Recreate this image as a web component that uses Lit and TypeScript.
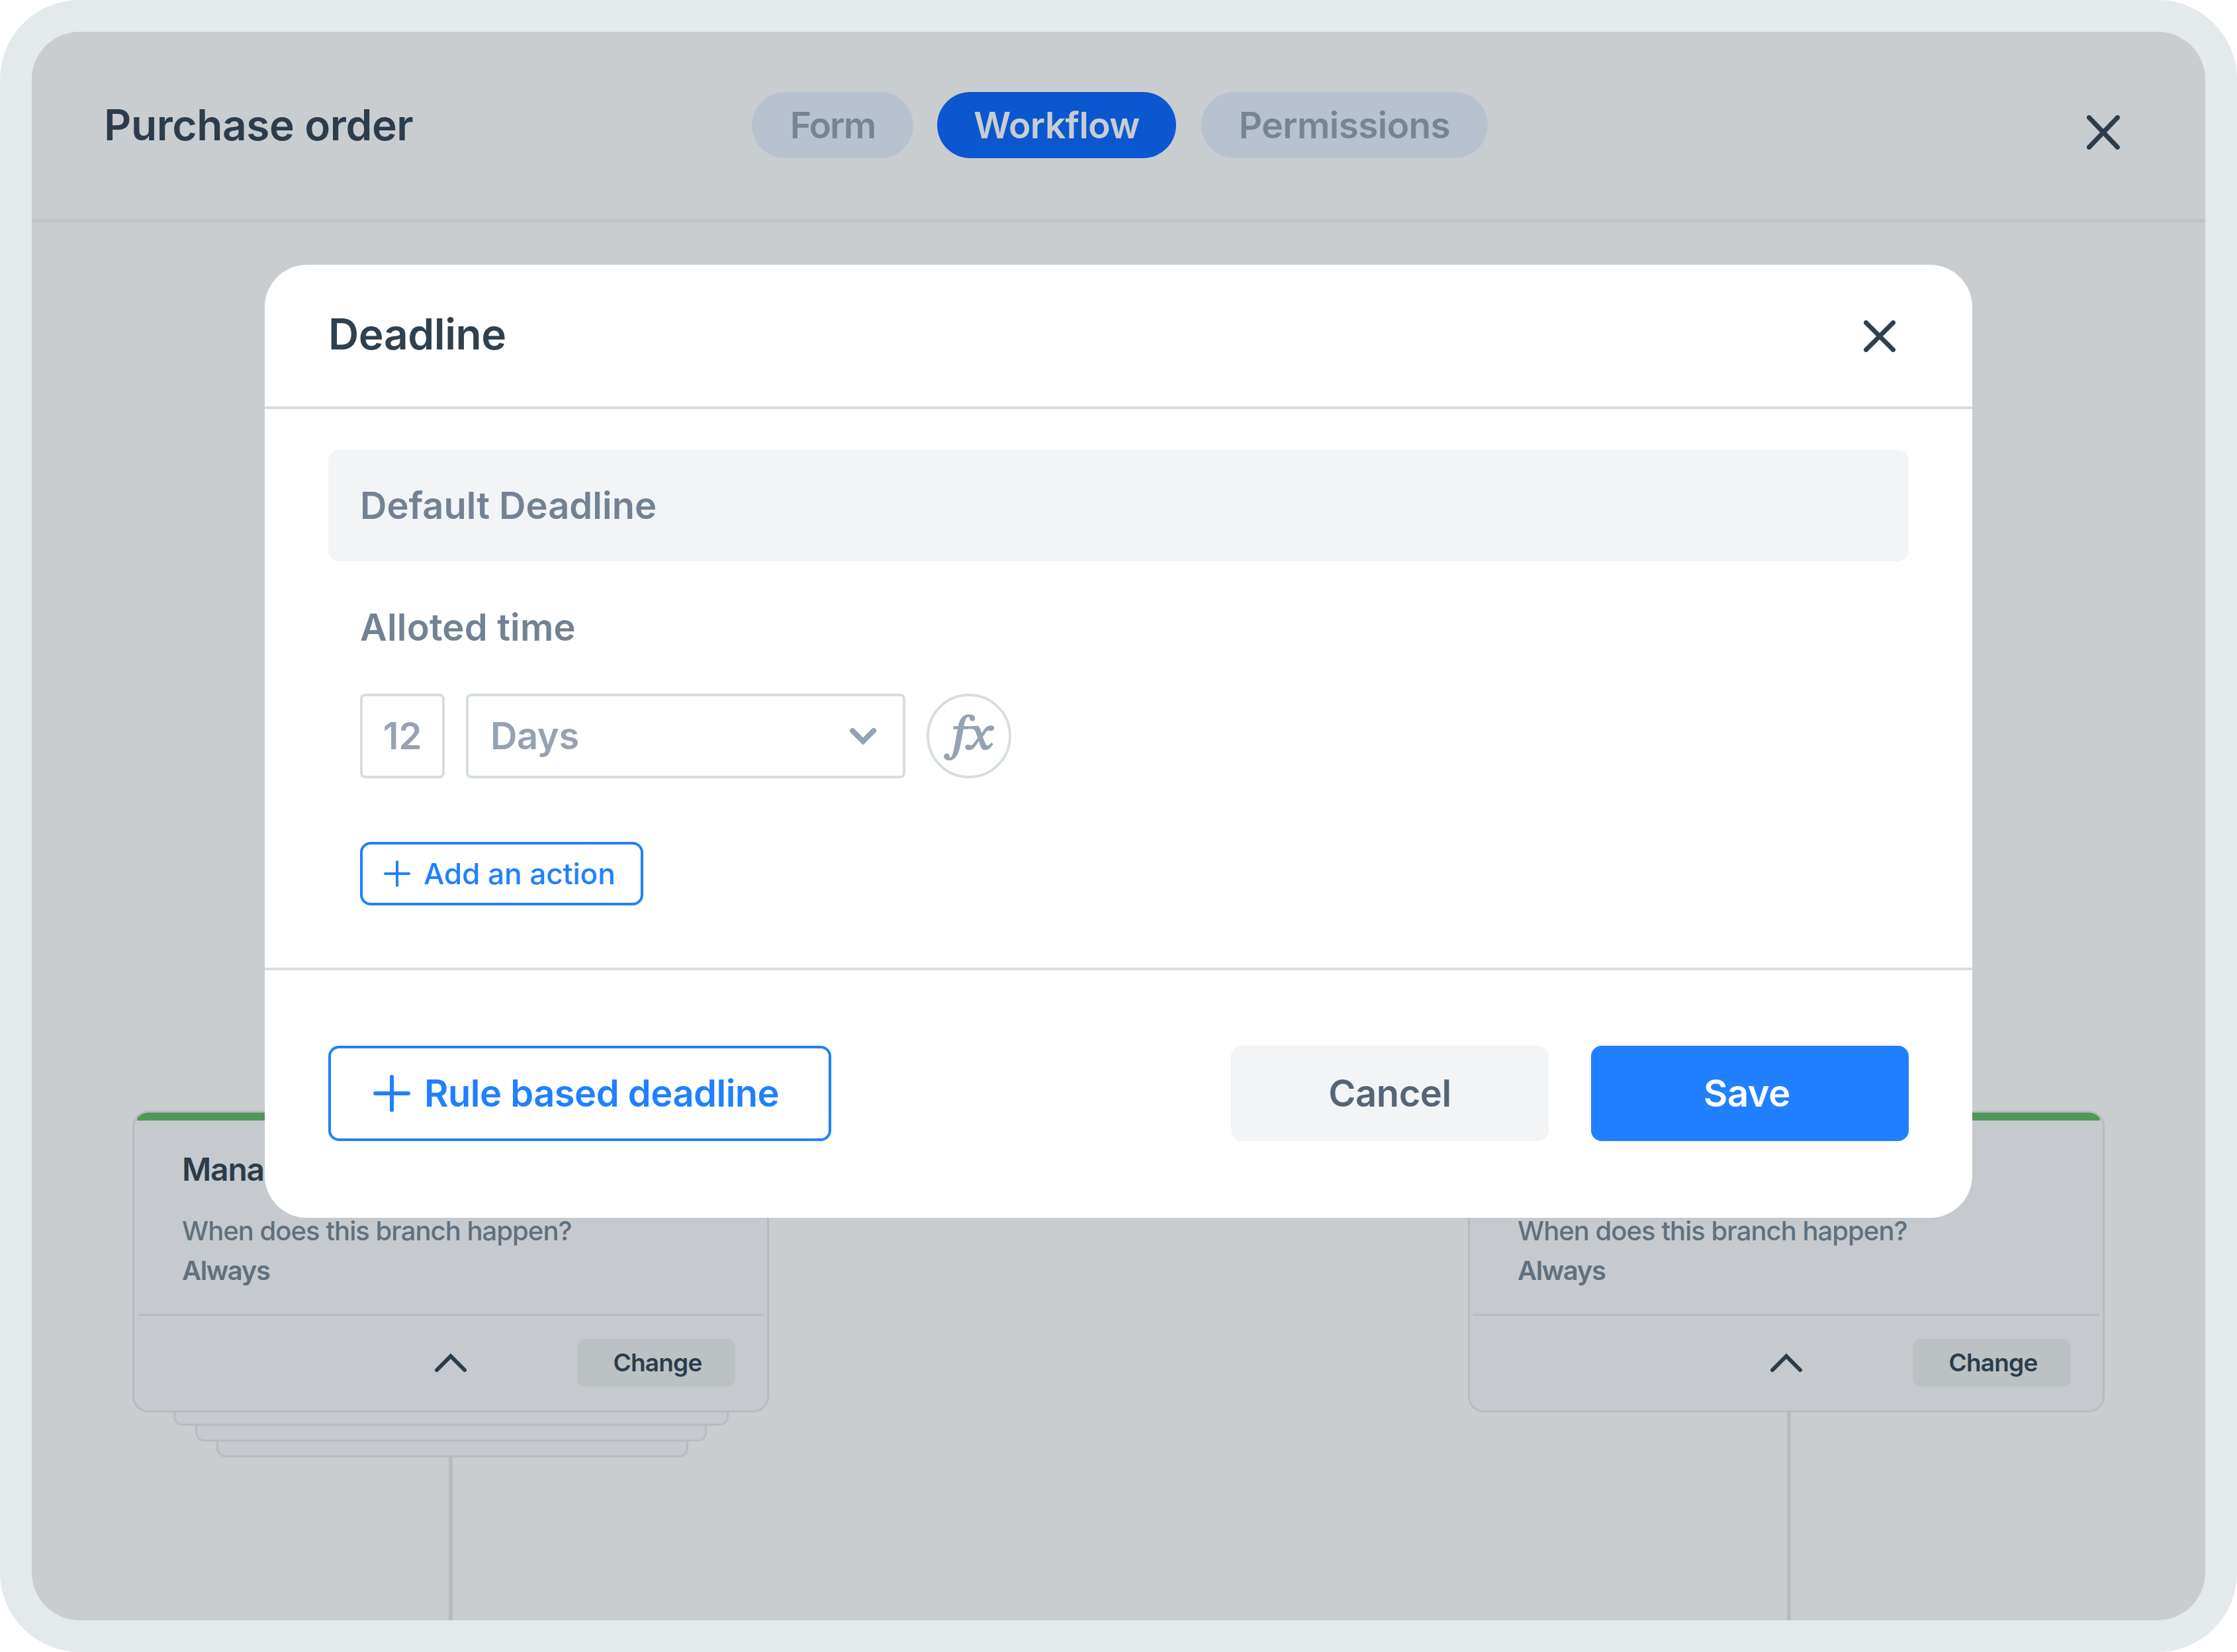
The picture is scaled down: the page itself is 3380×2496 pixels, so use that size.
import { LitElement, html, svg, css } from "lit";
import { customElement, property } from "lit/decorators.js";

const TABS = [
  { label: "Form", cls: "form" },
  { label: "Workflow", cls: "workflow active" },
  { label: "Permissions", cls: "permissions" },
];

const plus = (size: number, weight: number) => {
  const h = size / 2;
  const p = weight / 2;
  return html`<svg width=${size} height=${size} viewBox="0 0 ${size} ${size}">
    ${svg`<path d="M${h} ${p}V${size - p}M${p} ${h}H${size - p}" fill="none" stroke="currentColor" stroke-width=${weight} stroke-linecap="round" />`}
  </svg>`;
};

@customElement("branch-card")
class BranchCard extends LitElement {
  @property() heading = "";
  @property({ type: Boolean }) stacked = false;

  static styles = css`
    :host {
      display: flex;
      flex-direction: column;
      align-items: center;
      width: 962px;
      height: 770px;
      font-family: Inter, sans-serif;
    }
    .card {
      box-sizing: border-box;
      width: 962px;
      height: 456px;
      flex: none;
      border: 3px solid #b8bcc0;
      border-radius: 24px;
      background: #c6cace;
      overflow: hidden;
      display: flex;
      flex-direction: column;
    }
    .accent {
      height: 12px;
      margin: 0 4px;
      background: #4f9857;
      border-radius: 18px 18px 0 0;
      flex: none;
    }
    .info {
      height: 292px;
      box-sizing: border-box;
      padding: 45px 0 0 72px;
      flex: none;
      white-space: nowrap;
    }
    .heading {
      height: 58px;
      font-size: 48px;
      line-height: 58px;
      font-weight: 600;
      letter-spacing: -1.2px;
      color: #2c3c4a;
    }
    .question,
    .answer {
      font-size: 40px;
      line-height: 60px;
      color: #61707d;
    }
    .question {
      margin-top: 34px;
      font-weight: 500;
      letter-spacing: -0.96px;
    }
    .answer {
      font-weight: 600;
      letter-spacing: -1.4px;
    }
    .rule {
      height: 3px;
      margin: 0 5px;
      background: #b8bcc0;
      flex: none;
    }
    .foot {
      flex: 1;
      display: grid;
      grid-template-columns: 1fr 48px 1fr;
      align-items: center;
      padding: 0 48px 2px 5px;
    }
    .chev {
      width: 48px;
      height: 28px;
      margin-left: 21px;
      color: #2c3c4a;
      overflow: visible;
    }
    .change {
      box-sizing: border-box;
      justify-self: end;
      width: 239px;
      height: 72px;
      padding-left: 4px;
      border-radius: 12px;
      background: #bcc2c4;
      color: #2c3c4a;
      font-size: 37px;
      font-weight: 600;
      line-height: 72px;
      letter-spacing: -0.8px;
      text-align: center;
    }
    .layer {
      box-sizing: border-box;
      height: 24px;
      flex: none;
      border: 3px solid #b8bcc0;
      border-top: 0;
      border-radius: 0 0 14px 14px;
      background: #c6cace;
    }
    .l1 {
      width: 839px;
      height: 20px;
    }
    .l2 {
      width: 773px;
    }
    .l3 {
      width: 713px;
      margin-left: 5px;
    }
    .wire {
      width: 6px;
      flex: 1;
      background: #b8bcc0;
    }
    .wire.solo {
      margin-left: 7px;
    }
  `;

  render() {
    return html`
      <div class="card">
        <div class="accent"></div>
        <div class="info">
          <div class="heading">${this.heading}</div>
          <div class="question">When does this branch happen?</div>
          <div class="answer">Always</div>
        </div>
        <div class="rule"></div>
        <div class="foot">
          <span></span>
          <svg class="chev" viewBox="0 0 48 28">
            <path d="M3 25L24 4L45 25" fill="none" stroke="currentColor" stroke-width="6" stroke-linecap="round" />
          </svg>
          <div class="change">Change</div>
        </div>
      </div>
      ${this.stacked
        ? html`<div class="layer l1"></div><div class="layer l2"></div><div class="layer l3"></div>`
        : null}
      <div class="wire ${this.stacked ? "" : "solo"}"></div>
    `;
  }
}

@customElement("deadline-dialog")
class DeadlineDialog extends LitElement {
  static styles = css`
    :host {
      display: flex;
      flex-direction: column;
      width: 2580px;
      height: 1440px;
      border-radius: 64px;
      background: #fff;
      overflow: hidden;
      font-family: Inter, sans-serif;
      white-space: nowrap;
    }
    svg {
      display: block;
      flex: none;
    }
    .head {
      box-sizing: border-box;
      height: 218px;
      border-bottom: 4px solid #d5dde0;
      padding: 2px 116px 0 96px;
      display: flex;
      align-items: center;
      justify-content: space-between;
      color: #2f404e;
      font-size: 64px;
      font-weight: 600;
      letter-spacing: -0.4px;
    }
    .title {
      line-height: 78px;
      margin-bottom: 6px;
    }
    .body {
      box-sizing: border-box;
      height: 848px;
      padding: 62px 96px 0;
      border-bottom: 4px solid #d5dde0;
    }
    .banner {
      height: 168px;
      border-radius: 16px;
      background: #f2f4f6;
      color: #738293;
      font-size: 56px;
      font-weight: 600;
      line-height: 168px;
      padding-left: 48px;
    }
    .fields {
      padding: 66px 0 0 48px;
      display: flex;
      flex-direction: column;
      align-items: flex-start;
    }
    .label {
      color: #738293;
      font-size: 56px;
      font-weight: 600;
      line-height: 68px;
      letter-spacing: 0.2px;
    }
    .row {
      margin-top: 66px;
      display: flex;
      gap: 32px;
      color: #94a2b2;
      font-size: 56px;
      font-weight: 600;
      line-height: 120px;
    }
    .num,
    .select,
    .fx {
      box-sizing: border-box;
      height: 128px;
      border: 4px solid #d5dde0;
      border-radius: 8px;
    }
    .num {
      width: 128px;
      text-align: center;
    }
    .select {
      width: 664px;
      padding: 0 38px 0 33px;
      display: flex;
      align-items: center;
      justify-content: space-between;
      letter-spacing: -0.4px;
    }
    .fx {
      width: 128px;
      padding: 3px 0 0 1px;
      border-radius: 50%;
      display: flex;
      align-items: center;
      justify-content: center;
      font: 400 71px/116px "STIX Two Math", "Liberation Serif", serif;
      -webkit-text-stroke: 1.7px currentColor;
    }
    .glyphs {
      display: block;
      transform: scaleX(1.14);
    }
    .glyphs i {
      font-style: normal;
      text-transform: math-auto;
    }
    .glyphs .f {
      margin-right: -13.5px;
    }
    .add,
    .btn {
      box-sizing: border-box;
      border-radius: 16px;
      display: flex;
      align-items: center;
    }
    .add {
      margin-top: 96px;
      width: 428px;
      height: 96px;
      border: 4px solid #2080ff;
      color: #2080ff;
      padding-left: 32px;
      gap: 20px;
      font-size: 44px;
      font-weight: 500;
    }
    .foot {
      flex: 1;
      display: flex;
      padding: 114px 96px 0;
      gap: 64px;
      font-size: 56px;
      font-weight: 600;
      letter-spacing: -0.4px;
    }
    .btn {
      width: 480px;
      height: 144px;
      justify-content: center;
    }
    .rule {
      width: 760px;
      margin-right: auto;
      border: 4px solid #2080ff;
      color: #2080ff;
      justify-content: flex-start;
      padding-left: 64px;
      gap: 21px;
      letter-spacing: -0.5px;
    }
    .cancel {
      background: #f2f4f6;
      color: #556575;
    }
    .save {
      background: #2080ff;
      color: #fff;
      padding-right: 9px;
    }
  `;

  render() {
    return html`
      <div class="head">
        <div class="title">Deadline</div>
        <svg width="48" height="48" viewBox="0 0 48 48">
          <path d="M3.5 3.5L44.5 44.5M44.5 3.5L3.5 44.5" fill="none" stroke="currentColor" stroke-width="7" stroke-linecap="round" />
        </svg>
      </div>
      <div class="body">
        <div class="banner">Default Deadline</div>
        <div class="fields">
          <div class="label">Alloted time</div>
          <div class="row">
            <div class="num">12</div>
            <div class="select">
              <span>Days</span>
              <svg width="44" height="28" viewBox="0 0 44 28">
                <path d="M6 6L22 22L38 6" fill="none" stroke="currentColor" stroke-width="8" stroke-linecap="round" />
              </svg>
            </div>
            <div class="fx"><span class="glyphs"><i class="f">f</i><i>x</i></span></div>
          </div>
          <div class="add">${plus(40, 4)}<span>Add an action</span></div>
        </div>
      </div>
      <div class="foot">
        <div class="btn rule">${plus(56, 6)}<span>Rule based deadline</span></div>
        <div class="btn cancel">Cancel</div>
        <div class="btn save">Save</div>
      </div>
    `;
  }
}

@customElement("app-root")
class AppRoot extends LitElement {
  static styles = css`
    :host {
      display: block;
      box-sizing: border-box;
      width: 3380px;
      height: 2496px;
      padding: 48px;
      border-radius: 120px;
      background: #e4e9ec;
      font-family: Inter, sans-serif;
    }
    .app {
      position: relative;
      height: 2400px;
      border-radius: 72px;
      background: #c9cdd0;
      overflow: hidden;
    }
    .bar {
      box-sizing: border-box;
      height: 288px;
      border-bottom: 5px solid #bec3c6;
      padding: 0 129px 0 109px;
      display: grid;
      grid-template-columns: 979px 1fr 50px;
      color: #2c3c4a;
      white-space: nowrap;
    }
    .title {
      font-size: 64px;
      font-weight: 600;
      line-height: 78px;
      letter-spacing: -0.4px;
      padding-top: 102px;
    }
    .tabs {
      padding-top: 91px;
      display: flex;
      gap: 36px;
    }
    .tab {
      height: 100px;
      border-radius: 50px;
      background: #b8c2ce;
      color: #778592;
      font-size: 55px;
      font-weight: 600;
      line-height: 100px;
      letter-spacing: -0.6px;
      text-align: center;
    }
    .form {
      width: 244px;
      letter-spacing: -1.8px;
    }
    .workflow {
      width: 361px;
    }
    .permissions {
      width: 433px;
      margin-left: 2px;
    }
    .active {
      background: #0b57d0;
      color: #c9cdd0;
    }
    .close {
      display: block;
      margin-top: 126px;
    }
    .canvas {
      position: relative;
      height: 2112px;
    }
    .left,
    .right {
      position: absolute;
      top: 1342px;
    }
    .left {
      left: 152px;
    }
    .right {
      left: 2170px;
    }
    .dialog {
      position: absolute;
      left: 352px;
      top: 352px;
    }
  `;

  render() {
    return html`
      <div class="app">
        <div class="bar">
          <div class="title">Purchase order</div>
          <div class="tabs">
            ${TABS.map((t) => html`<div class="tab ${t.cls}">${t.label}</div>`)}
          </div>
          <svg class="close" width="50" height="52" viewBox="0 0 50 52">
            <path d="M3.5 3.5L46.5 48.5M46.5 3.5L3.5 48.5" fill="none" stroke="currentColor" stroke-width="7" stroke-linecap="round" />
          </svg>
        </div>
        <div class="canvas">
          <branch-card class="left" heading="Mana" stacked></branch-card>
          <branch-card class="right"></branch-card>
        </div>
        <deadline-dialog class="dialog"></deadline-dialog>
      </div>
    `;
  }
}
